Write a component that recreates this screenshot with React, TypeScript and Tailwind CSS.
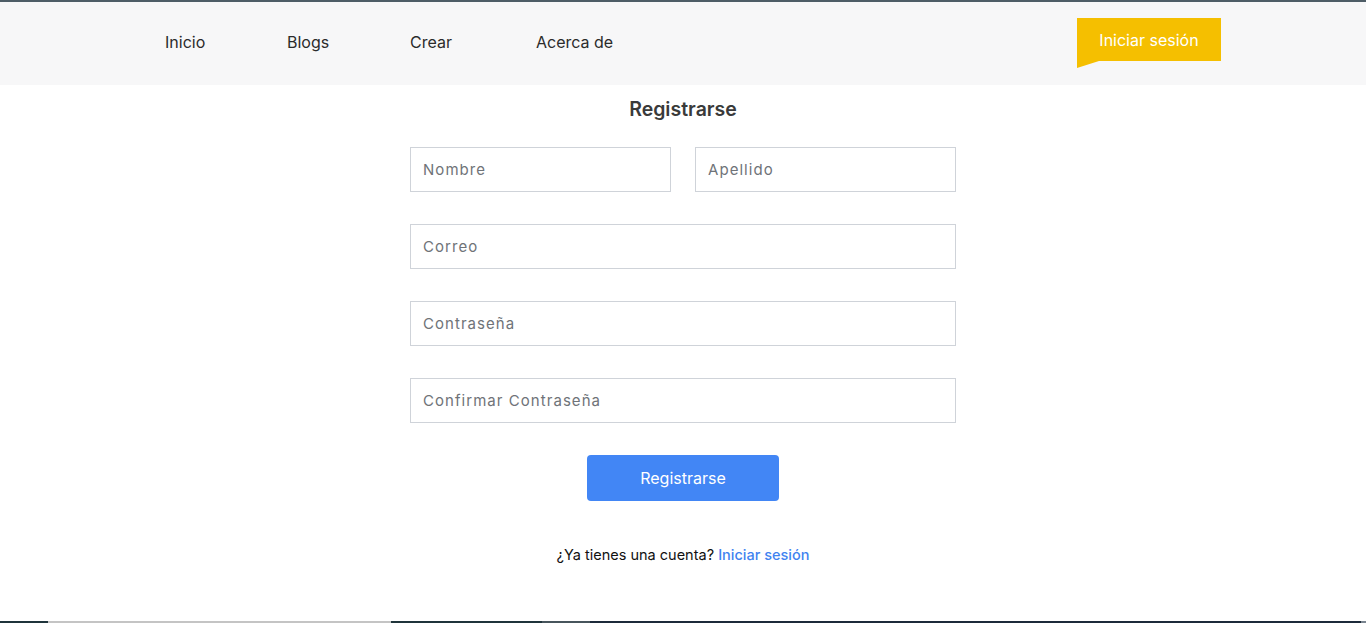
const font = { fontFamily: "Inter, 'Open Sans', sans-serif" };

function Field({ placeholder, className = "" }: { placeholder: string; className?: string }) {
  return (
    <input
      type="text"
      placeholder={placeholder}
      className={`h-[45px] border border-[#cfd3d9] bg-white px-[12px] text-[15px] tracking-[0.07em] text-[#333] placeholder:text-[#6f7378] outline-none ${className}`}
    />
  );
}

export default function App() {
  return (
    <div className="flex h-[623px] flex-col overflow-hidden bg-white font-['Inter',sans-serif]">
      <div className="h-[2px] bg-[#4e5d66]" />

      <header className="flex h-[83px] items-center bg-[#f7f7f8] pb-[4px] pl-[165px] pr-[145px]">
        <nav className="flex items-center gap-[80px] text-[16px] text-[#2b2b2b]">
          <a className="w-[42px]">Inicio</a>
          <a className="w-[43px]">Blogs</a>
          <a className="w-[46px]">Crear</a>
          <a>Acerca de</a>
        </nav>
        <div className="relative ml-auto -translate-y-[2px]">
          <button className="flex h-[43px] w-[144px] items-center justify-center bg-[#f5bf00] text-[16px] text-white">
            Iniciar sesión
          </button>
          <svg
            className="absolute left-0 top-[43px] h-[8px] w-[22px]"
            viewBox="0 0 22 8"
            aria-hidden
          >
            <polygon points="0,0 22,0 0,7" fill="#f5bf00" />
          </svg>
        </div>
      </header>

      <main className="flex flex-1 flex-col items-center">
        <h1 className="mt-[10px] text-[19.5px] font-semibold text-[#3a3a3a]">Registrarse</h1>

        <form className="mt-[23px] flex w-[546px] flex-col gap-[32px]">
          <div className="flex gap-[24px]">
            <Field placeholder="Nombre" className="w-[261px]" />
            <Field placeholder="Apellido" className="w-[261px]" />
          </div>
          <Field placeholder="Correo" className="w-full" />
          <Field placeholder="Contraseña" className="w-full" />
          <Field placeholder="Confirmar Contraseña" className="w-full" />
        </form>

        <button className="mt-[32px] h-[46px] w-[192px] rounded-[4px] bg-[#4286f5] text-[16px] text-white">
          Registrarse
        </button>

        <p className="mt-[43px] text-[14.5px] text-[#111]" style={font}>
          ¿Ya tienes una cuenta?{" "}
          <a className="font-medium text-[#3f83f0]">Iniciar sesión</a>
        </p>
      </main>

      <div className="flex h-[2px]">
        <div className="w-[48px] bg-[#1f343b]" />
        <div className="w-[343px] bg-[#c4c4c4]" />
        <div className="w-[151px] bg-[#1f343b]" />
        <div className="w-[48px] bg-[#47555c]" />
        <div className="flex-1 bg-[#1c2a3a]" />
        <div className="w-[5px] bg-[#7a8590]" />
      </div>
    </div>
  );
}
